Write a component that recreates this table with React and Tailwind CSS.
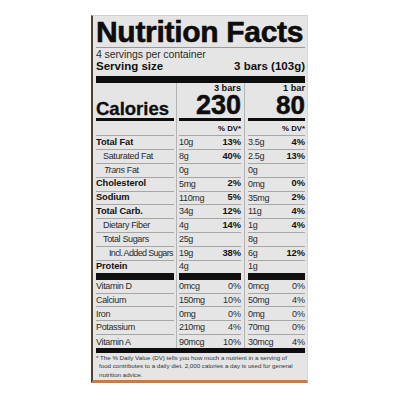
import React from "react";

const Gap5 = () => (
  <div className="flex w-[5px] shrink-0 justify-center">
    <div className="w-px bg-[#b4b4b4]" />
  </div>
);
const Gap7 = () => (
  <div className="flex w-[7px] shrink-0 justify-center">
    <div className="w-px bg-[#b4b4b4]" />
  </div>
);

const nutrients = [
  { label: "Total Fat", bold: true, pad: "pl-0", v1: "10g", p1: "13%", v2: "3.5g", p2: "4%" },
  { label: "Saturated Fat", pad: "pl-[7px]", v1: "8g", p1: "40%", v2: "2.5g", p2: "13%" },
  { label: "trans", pad: "pl-[8px]", v1: "0g", p1: "", v2: "0g", p2: "" },
  { label: "Cholesterol", bold: true, pad: "pl-0", v1: "5mg", p1: "2%", v2: "0mg", p2: "0%" },
  { label: "Sodium", bold: true, pad: "pl-0", v1: "110mg", p1: "5%", v2: "35mg", p2: "2%" },
  { label: "Total Carb.", bold: true, pad: "pl-0", v1: "34g", p1: "12%", v2: "11g", p2: "4%" },
  { label: "Dietary Fiber", pad: "pl-[7px]", v1: "4g", p1: "14%", v2: "1g", p2: "4%" },
  { label: "Total Sugars", pad: "pl-[7px]", v1: "25g", p1: "", v2: "8g", p2: "" },
  { label: "Incl. Added Sugars", pad: "pl-[13px]", tight: true, v1: "19g", p1: "38%", v2: "6g", p2: "12%" },
];

const vitamins = [
  { label: "Vitamin D", v1: "0mcg", p1: "0%", v2: "0mcg", p2: "0%" },
  { label: "Calcium", v1: "150mg", p1: "10%", v2: "50mg", p2: "4%" },
  { label: "Iron", v1: "0mg", p1: "0%", v2: "0mg", p2: "0%" },
  { label: "Potassium", v1: "210mg", p1: "4%", v2: "70mg", p2: "0%" },
  { label: "Vitamin A", v1: "90mcg", p1: "10%", v2: "30mcg", p2: "4%", last: true },
];

function Label({ n }) {
  if (n.label === "trans") {
    return (
      <span>
        <i>Trans</i> Fat
      </span>
    );
  }
  if (n.bold) {
    return <span className="text-[9.3px] font-bold tracking-[-0.1px] text-[#111]">{n.label}</span>;
  }
  if (n.tight) {
    return <span className="tracking-[-0.65px] whitespace-nowrap">{n.label}</span>;
  }
  return <span>{n.label}</span>;
}

export default function App() {
  return (
    <div className="h-[400px] w-[400px] bg-white pl-[91px] pt-[15px] font-['Liberation_Sans',Arial,sans-serif]">
      <div className="flex h-[368px] w-[217px] flex-col border-b-[3px] border-l-2 border-r border-t border-b-[#c17d52] border-l-[#4d4039] border-r-[#d6d6d6] border-t-[#d2d2d2] bg-[#e5e5e5] pl-[3px] pr-[2px] pt-px">
        {/* Title */}
        <div className="h-[31px] whitespace-nowrap border-b border-[#9a9a9a] text-[30px] font-bold leading-[30px] tracking-[-0.3px] text-[#0d0d0d] [-webkit-text-stroke:0.6px_#0d0d0d]">
          Nutrition Facts
        </div>
        <div className="h-[12px] text-[10.5px] leading-[12px] tracking-[-0.1px] text-[#2e2e2e]">
          4 servings per container
        </div>
        <div className="flex h-[13px] items-center justify-between text-[11.5px] font-bold leading-[13px] text-[#111]">
          <span>Serving size</span>
          <span>3 bars (103g)</span>
        </div>
        <div className="mt-[3px] h-[7px] bg-[#0d0d0d]" />

        {/* Column headers */}
        <div className="flex h-[12px] text-[9.2px] font-bold leading-none text-[#111]">
          <div className="w-[78px] shrink-0" />
          <Gap5 />
          <div className="flex w-[62px] shrink-0 items-start justify-end pt-px">3 bars</div>
          <Gap7 />
          <div className="flex w-[57px] shrink-0 items-start justify-end pt-px">1 bar</div>
        </div>

        {/* Calories */}
        <div className="flex h-[26px] font-bold text-[#0d0d0d]">
          <div className="flex w-[78px] shrink-0 flex-col justify-end border-b-[3px] border-[#0d0d0d] pb-[2px] text-[18.5px] leading-[15px] [-webkit-text-stroke:0.3px_#0d0d0d]">
            Calories
          </div>
          <Gap5 />
          <div className="flex w-[62px] shrink-0 flex-col items-end justify-end border-b-[3px] border-[#0d0d0d] pb-[2px] text-[27px] leading-[21px] [-webkit-text-stroke:0.5px_#0d0d0d]">
            230
          </div>
          <Gap7 />
          <div className="flex w-[57px] shrink-0 flex-col items-end justify-end border-b-[3px] border-[#0d0d0d] pb-[2px] text-[26px] leading-[21px] [-webkit-text-stroke:0.5px_#0d0d0d]">
            80
          </div>
        </div>

        {/* % DV */}
        <div className="flex h-[15px] text-[7.8px] font-bold leading-none text-[#111]">
          <div className="w-[78px] shrink-0 border-b border-[#a6a6a6]" />
          <Gap5 />
          <div className="flex w-[62px] shrink-0 items-end justify-end border-b border-[#a6a6a6] pb-[2px]">% DV*</div>
          <Gap7 />
          <div className="flex w-[57px] shrink-0 items-end justify-end border-b border-[#a6a6a6] pb-[2px]">% DV*</div>
        </div>

        {/* Nutrients */}
        {nutrients.map((n) => (
          <div key={n.label} className="flex h-[13.9px] text-[9px] leading-none tracking-[-0.35px] text-[#2b2b2b]">
            <div className={`flex w-[78px] shrink-0 items-center border-b border-[#a6a6a6] ${n.pad}`}>
              <Label n={n} />
            </div>
            <Gap5 />
            <div className="flex w-[62px] shrink-0 items-center justify-between border-b border-[#a6a6a6]">
              <span>{n.v1}</span>
              <span className="text-[9.3px] font-bold tracking-normal text-[#111]">{n.p1}</span>
            </div>
            <Gap7 />
            <div className="flex w-[57px] shrink-0 items-center justify-between border-b border-[#a6a6a6]">
              <span>{n.v2}</span>
              <span className="text-[9.3px] font-bold tracking-normal text-[#111]">{n.p2}</span>
            </div>
          </div>
        ))}

        {/* Protein */}
        <div className="flex h-[11.9px] text-[9px] leading-none tracking-[-0.35px] text-[#2b2b2b]">
          <div className="flex w-[78px] shrink-0 items-center">
            <span className="text-[9.3px] font-bold tracking-[-0.1px] text-[#111]">Protein</span>
          </div>
          <Gap5 />
          <div className="flex w-[62px] shrink-0 items-center">4g</div>
          <Gap7 />
          <div className="flex w-[57px] shrink-0 items-center">1g</div>
        </div>

        {/* Black bar split */}
        <div className="flex h-[7px]">
          <div className="w-[78px] shrink-0 bg-[#111]" />
          <Gap5 />
          <div className="w-[62px] shrink-0 bg-[#111]" />
          <Gap7 />
          <div className="w-[57px] shrink-0 bg-[#111]" />
        </div>

        {/* Vitamins */}
        {vitamins.map((n) => (
          <div key={n.label} className="flex h-[13.7px] text-[9px] leading-none tracking-[-0.35px] text-[#2b2b2b]">
            <div className={`flex w-[78px] shrink-0 items-center pt-px ${n.last ? "" : "border-b border-[#a6a6a6]"}`}>
              {n.label}
            </div>
            <Gap5 />
            <div className={`flex w-[62px] shrink-0 items-center justify-between pt-px ${n.last ? "" : "border-b border-[#a6a6a6]"}`}>
              <span>{n.v1}</span>
              <span className="tracking-normal">{n.p1}</span>
            </div>
            <Gap7 />
            <div className={`flex w-[57px] shrink-0 items-center justify-between pt-px ${n.last ? "" : "border-b border-[#a6a6a6]"}`}>
              <span>{n.v2}</span>
              <span className="tracking-normal">{n.p2}</span>
            </div>
          </div>
        ))}

        <div className="h-[4.5px] bg-[#0d0d0d]" />

        {/* Footnote */}
        <div className="pt-px text-[6.2px] leading-[8.5px] text-[#333] whitespace-nowrap">
          <div>* The % Daily Value (DV) tells you how much a nutrient in a serving of</div>
          <div className="pl-[3px]">food contributes to a daily diet. 2,000 calories a day is used for general</div>
          <div className="pl-[3px]">nutrition advice.</div>
        </div>
      </div>
    </div>
  );
}
